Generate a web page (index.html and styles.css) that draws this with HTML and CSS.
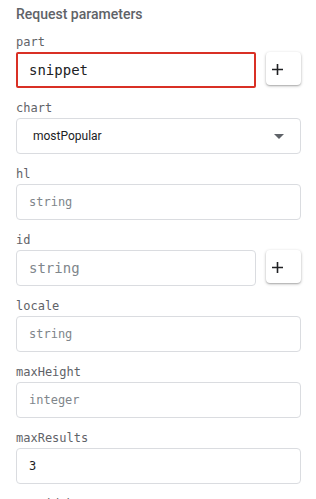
FILE: index.html
```html
<!DOCTYPE html>
<html lang="en">
<head>
  <meta charset="UTF-8"/>
  <title>Request parameters</title>
  <link rel="stylesheet" href="styles.css">
</head>
<body>
  <div class="params">
    <h2>Request parameters</h2>

    <div class="field">
      <label>part</label>
      <div class="row">
        <input class="box big error" value="snippet">
        <button class="add" aria-label="Add">
          <svg width="11" height="11" viewBox="0 0 11 11"><path d="M5.5 0v11M0 5.5h11" stroke="#202124" stroke-width="1.6"/></svg>
        </button>
      </div>
    </div>

    <div class="field">
      <label>chart</label>
      <div class="box select">
        <span>mostPopular</span>
        <span class="caret"></span>
      </div>
    </div>

    <div class="field">
      <label>hl</label>
      <input class="box" placeholder="string">
    </div>

    <div class="field">
      <label>id</label>
      <div class="row">
        <input class="box big" placeholder="string">
        <button class="add" aria-label="Add">
          <svg width="11" height="11" viewBox="0 0 11 11"><path d="M5.5 0v11M0 5.5h11" stroke="#202124" stroke-width="1.6"/></svg>
        </button>
      </div>
    </div>

    <div class="field">
      <label>locale</label>
      <input class="box" placeholder="string">
    </div>

    <div class="field">
      <label>maxHeight</label>
      <input class="box" placeholder="integer">
    </div>

    <div class="field">
      <label>maxResults</label>
      <input class="box" value="3">
    </div>

    <div class="field">
      <label>maxWidth</label>
      <input class="box" placeholder="integer">
    </div>
  </div>
</body>
</html>
```

FILE: styles.css
```css
* {
  box-sizing: border-box;
  margin: 0;
  padding: 0;
}

body {
  background: #fff;
  font-family: Roboto, 'Liberation Sans', sans-serif;
  color: #202124;
}

.params {
  width: 285px;
  margin-left: 16px;
  padding-top: 4px;
}

h2 {
  font-size: 14px;
  font-weight: 500;
  line-height: 20px;
  color: #5f6368;
  margin-bottom: 10px;
}

.field {
  margin-bottom: 12px;
}

label {
  display: block;
  font-family: 'DejaVu Sans Mono', monospace;
  font-size: 12px;
  line-height: 16px;
  color: #5f6368;
  margin-bottom: 2px;
}

.row {
  display: flex;
  gap: 10px;
  align-items: flex-start;
}

.box {
  display: block;
  width: 100%;
  height: 36px;
  border: 1px solid #dadce0;
  border-radius: 4px;
  padding: 0 12px;
  font-family: 'DejaVu Sans Mono', monospace;
  font-size: 12px;
  color: #202124;
  background: #fff;
  outline: none;
}

.row .box {
  flex: 1;
  width: auto;
  min-width: 0;
}

.box::placeholder {
  color: #80868b;
}

.box.big {
  font-size: 14px;
}

.box.error {
  border: 2px solid #d93025;
  border-radius: 2px;
  padding: 0 11px;
}

.select {
  display: flex;
  align-items: center;
  justify-content: space-between;
  padding: 0 16px;
  font-family: Roboto, 'Liberation Sans', sans-serif;
  font-size: 12px;
}

.caret {
  width: 0;
  height: 0;
  border-left: 5px solid transparent;
  border-right: 5px solid transparent;
  border-top: 5px solid #5f6368;
}

.add {
  display: flex;
  align-items: center;
  width: 35px;
  height: 33px;
  flex: none;
  padding: 1px 0 0 6px;
  border: none;
  border-radius: 4px;
  background: #fff;
  box-shadow: 0 1px 3px rgba(0, 0, 0, 0.3), 0 1px 1px rgba(0, 0, 0, 0.1);
}
```
